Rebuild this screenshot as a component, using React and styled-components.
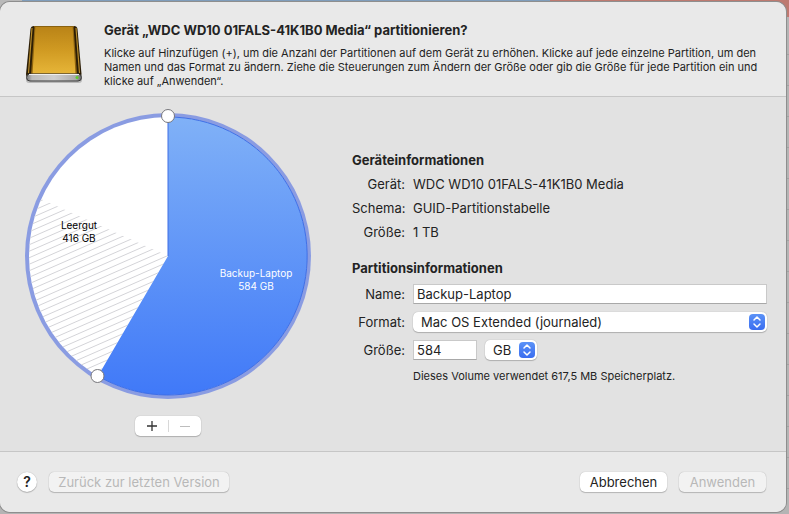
import React, { useState } from 'react';
import styled, { createGlobalStyle, css } from 'styled-components';

const GlobalStyle = createGlobalStyle`
  * {
    box-sizing: border-box;
  }
  body {
    margin: 0;
    background: #b4b4b4;
    color: #232323;
    font: 13px/16px Inter, "Liberation Sans", sans-serif;
  }
  button, input, select {
    font: inherit;
    color: inherit;
  }
`;

// stripes over the free part of a volume
const stripes = Array.from({ length: 40 }, (_, i) => 70 + i * 6.5);

function DiskIcon() {
  return (
    <Disk viewBox="0 0 64 64" aria-hidden="true">
      <defs>
        <linearGradient id="gold" x1="0" y1="0" x2="0" y2="1">
          <stop offset="0" stopColor="#b98317" />
          <stop offset="0.5" stopColor="#d09a22" />
          <stop offset="1" stopColor="#e6b538" />
        </linearGradient>
        <linearGradient id="front" x1="0" y1="0" x2="1" y2="0">
          <stop offset="0" stopColor="#777" />
          <stop offset="0.1" stopColor="#bbb" />
          <stop offset="0.5" stopColor="#cfcfcf" />
          <stop offset="0.9" stopColor="#aaa" />
          <stop offset="1" stopColor="#666" />
        </linearGradient>
      </defs>
      <rect x="4" y="55" width="56" height="6" rx="3" fill="#000" opacity="0.2" />
      <path d="M12 4h40q3 0 3.500 3l4 45q0 4-4 4H8q-4 0-4-4L8.500 7q.5-3 3.500-3z" fill="#2b1d05" />
      <path d="M10 6L6.500 51M54 6l3.500 45" stroke="#b58a2a" strokeWidth="1.200" />
      <path d="M12.500 4h39l3.500 48H9z" fill="#8f6510" />
      <path d="M13.500 4.500h37l3 47h-43z" fill="url(#gold)" />
      <path d="M12 4.500h40" stroke="#8a6210" />
      <rect x="4.500" y="52" width="55" height="7" rx="3.500" fill="url(#front)" stroke="#3c3c3c" />
      <path d="M7 52.500h50" stroke="#efefef" />
      <circle cx="55" cy="55.500" r="1.500" fill="#5cd02c" />
    </Disk>
  );
}

function PartitionChart() {
  return (
    <Chart viewBox="0 0 288 288" role="img" aria-label="Partitionen">
      <defs>
        <linearGradient id="used" x1="0" y1="0" x2="0" y2="1">
          <stop offset="0" stopColor="#80b1f7" />
          <stop offset="1" stopColor="#4079f8" />
        </linearGradient>
        <clipPath id="free">
          <path d="M144 144L74 264A139 139 0 0 1 17 87z" />
        </clipPath>
      </defs>
      <circle cx="144" cy="144" r="143" fill="#8a9ce2" />
      <circle cx="144" cy="144" r="139" fill="#fff" />
      <g clipPath="url(#free)" stroke="#d4d4d8">
        {stripes.map((y) => <line key={y} x1="0" y1={y} x2="144" y2={y - 63} />)}
      </g>
      <path d="M144 144V5A139 139 0 1 1 74 264z" fill="url(#used)" />
      <path d="M144 144V5A139 139 0 1 1 74 264" fill="none" stroke="#3f6fe6" />
      <g fill="#000">
        <text x="55" y="117" textAnchor="middle">Leergut</text>
        <text x="55" y="130" textAnchor="middle">416 GB</text>
      </g>
      <g fill="#fff">
        <text x="232" y="165" textAnchor="middle">Backup-Laptop</text>
        <text x="232" y="178" textAnchor="middle">584 GB</text>
      </g>
      <g fill="#fff" stroke="#77777c">
        <circle cx="144" cy="4" r="6.500" />
        <circle cx="73.500" cy="264" r="6.500" />
      </g>
    </Chart>
  );
}

function Stepper() {
  return (
    <StepperBox>
      <svg width="16" height="16" viewBox="0 0 16 16" fill="none" stroke="#fff" strokeWidth="1.500" strokeLinecap="round" strokeLinejoin="round">
        <path d="M5 6l3-3 3 3M5 10l3 3 3-3" />
      </svg>
    </StepperBox>
  );
}

function App() {
  const [name, setName] = useState('Backup-Laptop');
  const [size, setSize] = useState('584');

  return (
    <Desktop>
      <GlobalStyle />
      <Backdrop>
        <Segment $color="#b9b9b9" $grow={22} />
        <Segment $color="#7f9dbb" $grow={528} />
        <Segment $color="#bd7a70" $grow={239} />
      </Backdrop>
      <Dialog>
        <Header>
          <DiskIcon />
          <div>
            <Title>Gerät „WDC WD10 01FALS-41K1B0 Media“ partitionieren?</Title>
            <Intro>
              Klicke auf Hinzufügen (+), um die Anzahl der Partitionen auf dem Gerät zu erhöhen. Klicke auf jede einzelne Partition, um den Namen und das Format zu ändern. Ziehe die Steuerungen zum Ändern der Größe oder gib die Größe für jede Partition ein und klicke auf „Anwenden“.
            </Intro>
          </div>
        </Header>
        <Body>
          <ChartColumn>
            <PartitionChart />
            <Segmented>
              <button type="button" aria-label="Hinzufügen">
                <svg width="12" height="12" viewBox="0 0 12 12" stroke="#333" strokeWidth="1.300"><path d="M1 6h10M6 1v10" /></svg>
              </button>
              <button type="button" aria-label="Entfernen" disabled>
                <svg width="12" height="12" viewBox="0 0 12 12" stroke="#bdbdbd"><path d="M1 6.500h10" /></svg>
              </button>
            </Segmented>
          </ChartColumn>
          <Details>
            <Heading>Geräteinformationen</Heading>
            <InfoList>
              <dt>Gerät:</dt>
              <dd>WDC WD10 01FALS-41K1B0 Media</dd>
              <dt>Schema:</dt>
              <dd>GUID-Partitionstabelle</dd>
              <dt>Größe:</dt>
              <dd>1 TB</dd>
            </InfoList>
            <Heading>Partitionsinformationen</Heading>
            <Form>
              <label htmlFor="name">Name:</label>
              <TextField id="name" value={name} onChange={(e) => setName(e.target.value)} />
              <label htmlFor="format">Format:</label>
              <SelectBox>
                <select id="format"><option>Mac OS Extended (journaled)</option></select>
                <Stepper />
              </SelectBox>
              <label htmlFor="size">Größe:</label>
              <SizeRow>
                <TextField id="size" $width="64px" value={size} onChange={(e) => setSize(e.target.value)} />
                <SelectBox $width="52px">
                  <select aria-label="Einheit"><option>GB</option></select>
                  <Stepper />
                </SelectBox>
              </SizeRow>
              <Note>Dieses Volume verwendet 617,5 MB Speicherplatz.</Note>
            </Form>
          </Details>
        </Body>
        <Footer>
          <HelpButton type="button" aria-label="Hilfe">?</HelpButton>
          <Button type="button" $width="180px" disabled>Zurück zur letzten Version</Button>
          <Spacer />
          <Button type="button">Abbrechen</Button>
          <Button type="button" disabled>Anwenden</Button>
        </Footer>
      </Dialog>
    </Desktop>
  );
}

const Desktop = styled.div`
  position: relative;
  min-height: 100vh;
  padding: 2px 3px 2px 0;
  display: flex;
  background: repeating-linear-gradient(#b4b4b4 0 30px, #a2a2a2 30px 31px) 0 24px;
`;
const Backdrop = styled.div`
  position: absolute;
  inset: 0 0 auto;
  height: 17px;
  display: flex;
`;
const Segment = styled.div`
  flex: ${(p) => p.$grow} 0 0;
  background: ${(p) => p.$color};
`;
const Dialog = styled.main`
  position: relative;
  flex: 1;
  display: flex;
  flex-direction: column;
  background: #e2e2e2;
  border-radius: 10px;
  overflow: hidden;
  box-shadow: 0 0 0 1px #8e8e8e;
`;
const Header = styled.header`
  display: flex;
  gap: 18px;
  padding: 20px 20px 8px 22px;
  background: #e9e9e9;
  border-bottom: 1px solid #c6c6c6;
`;
const Disk = styled.svg`
  flex: none;
  width: 64px;
  height: 64px;
`;
const Title = styled.h1`
  margin: 0 0 8px;
  font-size: 13px;
  line-height: 16px;
  font-weight: 700;
`;
const Intro = styled.p`
  margin: 0;
  font-size: 11px;
  line-height: 14px;
`;
const Body = styled.section`
  flex: 1;
  display: grid;
  grid-template-columns: 288px 1fr;
  gap: 40px;
  padding: 15px 20px 14px 24px;
`;
const ChartColumn = styled.div`
  display: flex;
  flex-direction: column;
  align-items: center;
  gap: 16px;
`;
const Chart = styled.svg`
  width: 100%;
  overflow: visible;
  font-size: 10px;
`;
const Segmented = styled.div`
  display: flex;
  background: #fff;
  border-radius: 5px;
  box-shadow: 0 0 1px rgba(0, 0, 0, 0.3), 0 1px 1px rgba(0, 0, 0, 0.2);
  button {
    display: grid;
    place-items: center;
    width: 33px;
    height: 20px;
    padding: 0;
    border: 0;
    background: none;
  }
  button + button {
    background: linear-gradient(#d8d8d8, #d8d8d8) 0 4px / 1px 12px no-repeat;
  }
`;
const Details = styled.div`
  padding-top: 40px;
`;
const Heading = styled.h2`
  margin: 0 0 8px;
  font-size: 13px;
  line-height: 16px;
  font-weight: 700;
`;
const InfoList = styled.dl`
  display: grid;
  grid-template-columns: 53px 1fr;
  gap: 8px;
  margin: 0 0 20px;
  dt {
    text-align: right;
    white-space: nowrap;
  }
  dd {
    margin: 0;
  }
`;
const Form = styled.form`
  display: grid;
  grid-template-columns: 53px 1fr;
  gap: 8px;
  margin-right: -1px;
  align-items: center;
  label {
    text-align: right;
    white-space: nowrap;
  }
`;
const TextField = styled.input`
  width: ${(p) => p.$width || '100%'};
  height: 20px;
  padding: 0 3px;
  border: 1px solid #c9c9c9;
  border-bottom-color: #a8a8a8;
  background: #fff;
  outline: none;
`;
const SelectBox = styled.div`
  display: flex;
  align-items: center;
  width: ${(p) => p.$width || '100%'};
  height: 20px;
  padding-right: 2px;
  border-radius: 5px;
  background: #fff;
  box-shadow: 0 0 1px rgba(0, 0, 0, 0.3), 0 1px 1px rgba(0, 0, 0, 0.2);
  select {
    appearance: none;
    flex: 1;
    min-width: 0;
    padding: 0 0 0 8px;
    border: 0;
    background: none;
    outline: none;
  }
`;
const StepperBox = styled.span`
  display: flex;
  border-radius: 4px;
  background: linear-gradient(#5b92f7, #3a6df0);
  pointer-events: none;
`;
const SizeRow = styled.div`
  display: flex;
  align-items: center;
  gap: 8px;
`;
const Note = styled.p`
  grid-column: 2;
  margin: 0;
  font-size: 11px;
`;
const Footer = styled.footer`
  display: flex;
  align-items: center;
  gap: 12px;
  height: 61px;
  padding: 0 20px 0 17px;
  background: #e9e9e9;
  border-top: 1px solid #c6c6c6;
`;
const raised = css`
  border: 0;
  padding: 0;
  background: #fff;
  box-shadow: 0 0 1px rgba(0, 0, 0, 0.3), 0 1px 1px rgba(0, 0, 0, 0.2);
`;
const HelpButton = styled.button`
  ${raised}
  width: 20px;
  height: 20px;
  border-radius: 50%;
  font-size: 14px;
  font-weight: 600;
`;
const Button = styled.button`
  ${raised}
  width: ${(p) => p.$width || '87px'};
  height: 20px;
  border-radius: 5px;
  white-space: nowrap;
  &:disabled {
    background: #f2f2f2;
    color: #b8b8b8;
  }
`;
const Spacer = styled.div`
  flex: 1;
`;

export default App;
